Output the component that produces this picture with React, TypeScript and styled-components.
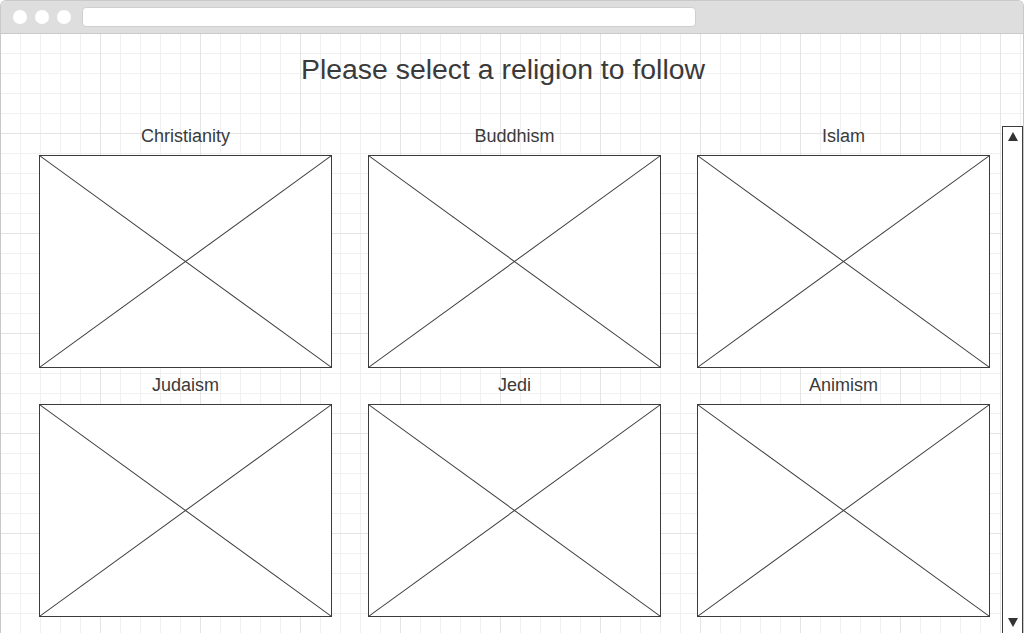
import styled, { createGlobalStyle } from 'styled-components';

const GlobalStyle = createGlobalStyle`
  html, body {
    margin: 0;
    padding: 0;
    background: #ffffff;
  }
  * {
    box-sizing: border-box;
  }
`;

const religions = ['Christianity', 'Buddhism', 'Islam', 'Judaism', 'Jedi', 'Animism'];

const Window = styled.div`
  width: 1024px;
  height: 633px;
  display: flex;
  flex-direction: column;
  border: 1px solid #c9c9c9;
  border-bottom: none;
  border-radius: 6px 6px 0 0;
  overflow: hidden;
  font-family: "Liberation Sans", Arial, sans-serif;
  color: #3a3a3a;
`;

const TitleBar = styled.div`
  height: 33px;
  flex-shrink: 0;
  display: flex;
  align-items: center;
  gap: 8px;
  padding-left: 12px;
  padding-bottom: 1px;
  background: #dedede;
  border-bottom: 1px solid #cacaca;
`;

const Dot = styled.span`
  width: 14px;
  height: 14px;
  border-radius: 50%;
  background: #ffffff;
`;

const UrlBar = styled.div`
  width: 614px;
  height: 20px;
  margin-left: 3px;
  background: #ffffff;
  border: 1px solid #cfcfcf;
  border-radius: 4px;
`;

const Canvas = styled.div`
  flex: 1;
  display: flex;
  flex-direction: column;
  padding-top: 19px;
  background-color: #ffffff;
  background-image:
    linear-gradient(to right, #e4e4e4 1px, transparent 1px),
    linear-gradient(to bottom, #e4e4e4 1px, transparent 1px),
    linear-gradient(to right, #f0f0f0 1px, transparent 1px),
    linear-gradient(to bottom, #f0f0f0 1px, transparent 1px);
  background-size: 100px 100px, 100px 100px, 20px 20px, 20px 20px;
  background-position: 99px 99px, 99px 99px, 19px 19px, 19px 19px;
`;

const Heading = styled.h1`
  margin: 0;
  font-size: 28.4px;
  line-height: 32px;
  font-weight: normal;
  text-align: center;
  padding-right: 18px;
`;

const Body = styled.div`
  flex: 1;
  display: flex;
  margin-top: 41px;
`;

const CardGrid = styled.div`
  flex: 1;
  display: grid;
  grid-template-columns: repeat(3, 293px);
  column-gap: 36px;
  row-gap: 7px;
  align-content: start;
  padding: 0 0 0 38px;
`;

const Card = styled.div`
  display: flex;
  flex-direction: column;
`;

const Label = styled.div`
  font-size: 18px;
  line-height: 21px;
  text-align: center;
  margin-bottom: 8px;
`;

const Placeholder = styled.div`
  height: 213px;
  background: #ffffff;
  border: 1px solid #3b3b3b;
  svg {
    display: block;
    width: 100%;
    height: 100%;
  }
`;

const Scrollbar = styled.div`
  width: 21px;
  height: 512px;
  flex-shrink: 0;
  display: flex;
  flex-direction: column;
  justify-content: space-between;
  align-items: center;
  padding: 5px 0 0;
  background: #ffffff;
  border: 1px solid #3b3b3b;
`;

const Arrow = styled.span<{ $down?: boolean }>`
  width: 0;
  height: 0;
  border-left: 5px solid transparent;
  border-right: 5px solid transparent;
  ${(p) =>
    p.$down
      ? 'border-top: 9px solid #333333; margin-bottom: 10px;'
      : 'border-bottom: 9px solid #333333;'}
`;

const ImageBox = () => (
  <Placeholder>
    <svg viewBox="0 0 100 100" preserveAspectRatio="none">
      <line x1="0" y1="0" x2="100" y2="100" stroke="#3b3b3b" strokeWidth="1" vectorEffect="non-scaling-stroke" />
      <line x1="100" y1="0" x2="0" y2="100" stroke="#3b3b3b" strokeWidth="1" vectorEffect="non-scaling-stroke" />
    </svg>
  </Placeholder>
);

const App = () => {
  return (
    <>
      <GlobalStyle />
      <Window>
        <TitleBar>
          <Dot />
          <Dot />
          <Dot />
          <UrlBar />
        </TitleBar>
        <Canvas>
          <Heading>Please select a religion to follow</Heading>
          <Body>
            <CardGrid>
              {religions.map((name) => (
                <Card key={name}>
                  <Label>{name}</Label>
                  <ImageBox />
                </Card>
              ))}
            </CardGrid>
            <Scrollbar>
              <Arrow />
              <Arrow $down />
            </Scrollbar>
          </Body>
        </Canvas>
      </Window>
    </>
  );
};

export default App;
